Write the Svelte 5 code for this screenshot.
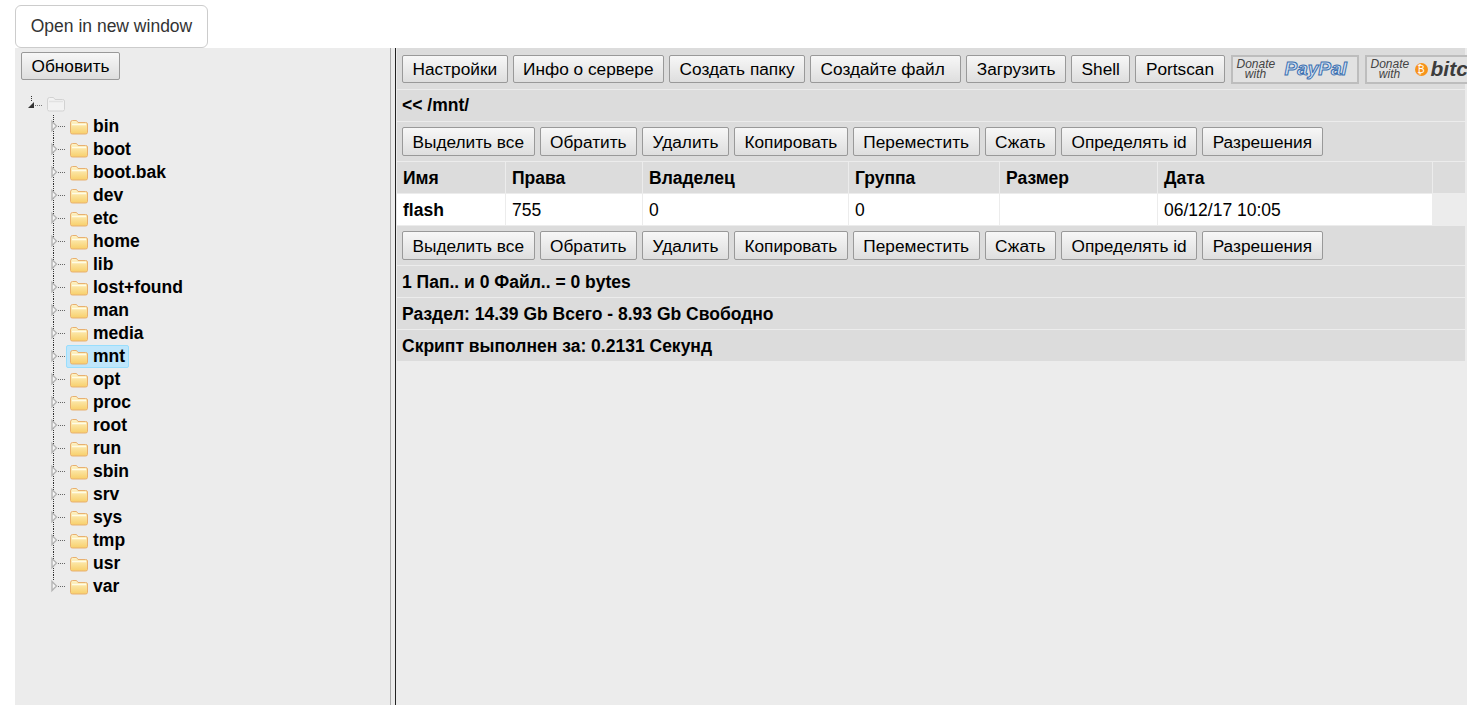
<script>
  const dirs = ['bin','boot','boot.bak','dev','etc','home','lib','lost+found','man','media','mnt','opt','proc','root','run','sbin','srv','sys','tmp','usr','var'];
  const top = ['Настройки','Инфо о сервере','Создать папку','Создайте файл','Загрузить','Shell','Portscan'];
  const acts = ['Выделить все','Обратить','Удалить','Копировать','Переместить','Сжать','Определять id','Разрешения'];
  const cols = [['Имя',109],['Права',137],['Владелец',206],['Группа',151],['Размер',158],['Дата',275]];
</script>

{#snippet folder(pale)}
  <svg class="folder" width="18" height="16" viewBox="0 0 18 16">
    <path d="M0.5 4 Q0.5 1.5 2.5 1.5 L6.5 1.5 L8 3.5 L15.5 3.5 Q17.5 3.5 17.5 5 L17.5 13.5 Q17.5 15 15.5 15 L2.5 15 Q0.5 15 0.5 13.5 Z" fill={pale ? '#f2f2f2' : 'url(#fold)'} stroke={pale ? '#d2d2d2' : '#e8b070'} />
    <path d="M2 5.5 H16" stroke={pale ? '#e2e2e2' : '#fffbe6'} stroke-width="1.5" />
  </svg>
{/snippet}

<svg class="defs" width="0" height="0" aria-hidden="true">
  <defs>
    <linearGradient id="fold" x1="0" y1="0" x2="0" y2="1">
      <stop offset="0" stop-color="#fdf3c8" />
      <stop offset="1" stop-color="#f8cf6a" />
    </linearGradient>
  </defs>
</svg>

<div class="page">
  <a class="open" href="#open">Open in new window</a>
  <div class="panel">
    <aside class="left">
      <button class="refresh">Обновить</button>
      <div class="root">
        <svg width="20" height="16" viewBox="0 0 20 16">
          <path d="M4.5 0 V6" stroke="#333" stroke-dasharray="1 1" />
          <path d="M1 12 L7 6 V12 Z" fill="#333" />
          <path d="M8 9.5 H15" stroke="#777" stroke-dasharray="1 1" />
        </svg>
        {@render folder(true)}
      </div>
      <ul class="tree">
        {#each dirs as d, i}
          <li>
            <svg class="arrow" width="16" height="23" viewBox="0 0 16 23">
              <path d={i === dirs.length - 1 ? 'M3.5 0 V6' : 'M3.5 0 V23'} stroke="#333" stroke-dasharray="1 1" />
              <path d="M2 6.5 L6.5 11 L2 15.5 Z" fill="#f6f6f6" stroke="#b4b4b4" stroke-width="1.4" />
              <path d="M8 11.5 H15" stroke="#666" stroke-dasharray="1 1" />
            </svg>
            <span class="node" class:sel={d === 'mnt'}>
              {@render folder(false)}
              <b>{d}</b>
            </span>
          </li>
        {/each}
      </ul>
    </aside>
    <div class="split"></div>
    <main class="right">
      <div class="row bar first">
        {#each top as t}<button class:wide={t === 'Создайте файл'}>{t}</button>{/each}
        <div class="donate paypal"><i>Donate<br />with</i><em>PayPal</em></div>
        <div class="donate btc"><i>Donate<br />with</i><span class="coin">₿</span><em>bitcoin</em></div>
      </div>
      <div class="row text"><b>&lt;&lt; /mnt/</b></div>
      <div class="row bar low">{#each acts as t}<button>{t}</button>{/each}</div>
      <div class="table">
        <div class="thead">
          {#each cols as c}<div class="cell" style="width:{c[1]}px"><b>{c[0]}</b></div>{/each}
        </div>
        <div class="tbody">
          <div class="cell" style="width:109px"><b>flash</b></div>
          <div class="cell" style="width:137px">755</div>
          <div class="cell" style="width:206px">0</div>
          <div class="cell" style="width:151px">0</div>
          <div class="cell" style="width:158px"></div>
          <div class="cell" style="width:275px">06/12/17 10:05</div>
        </div>
      </div>
      <div class="row bar low">{#each acts as t}<button>{t}</button>{/each}</div>
      <div class="row text down"><b>1 Пап.. и 0 Файл.. = 0 bytes</b></div>
      <div class="row text down"><b>Раздел: 14.39 Gb Всего - 8.93 Gb Свободно</b></div>
      <div class="row text down"><b>Скрипт выполнен за: 0.2131 Секунд</b></div>
    </main>
  </div>
</div>

<style>
  :global(body) { margin: 0; background: #fff; }
  .defs { position: absolute; }
  .page { height: 705px; overflow: hidden; font-family: "Liberation Sans", Arial, sans-serif; color: #000; box-sizing: border-box; padding: 5px 15px 0; }
  .open { display: block; box-sizing: border-box; width: 193px; height: 43px; line-height: 41px; text-align: center; border: 1px solid #ccc; border-radius: 6px; color: #333; font-size: 17.5px; text-decoration: none; background: #fff; }
  .panel { display: flex; width: 1452px; height: 657px; background: #ececec; overflow: hidden; }
  .left { width: 375px; flex: none; padding: 4px 0 0 6px; box-sizing: border-box; }
  button { height: 28px; box-sizing: border-box; padding: 0 9.5px; font: 17.25px "Liberation Sans", Arial, sans-serif; color: #000; border: 1px solid #999; border-radius: 2px; background: linear-gradient(#f7f7f7, #dedede); white-space: nowrap; flex: none; }
  .wide { padding-right: 15.5px; }
  .refresh { display: block; }
  .root { display: flex; align-items: center; height: 16px; margin: 16px 0 0 6px; }
  .tree { list-style: none; margin: 3px 0 0 29px; padding: 0; }
  .tree li { display: flex; height: 23px; align-items: center; font-size: 17.5px; }
  .arrow { flex: none; }
  .node { display: flex; align-items: center; height: 21px; padding: 0 3px; border: 1px solid transparent; border-radius: 2px; }
  .node b { margin-left: 5px; }
  .node.sel { background: #bfe6fb; border-color: #99defd; }
  .folder { flex: none; display: block; }
  .split { width: 6px; flex: none; background: #ececec; border-left: 1px solid #aaa; border-right: 1px solid #222; box-sizing: border-box; }
  .right { flex: 1; padding: 0 2px 0 1px; min-width: 0; font-size: 17.5px; }
  .row { background: #dcdcdc; margin-bottom: 1px; box-sizing: border-box; }
  .bar { display: flex; align-items: center; gap: 5px; padding-left: 5px; }
  .first { height: 41px; padding-top: 1px; }
  .first button { padding-top: 1px; }
  .low { height: 39px; }
  .low button { height: 29px; padding-top: 1px; }
  .text { height: 31px; line-height: 31px; padding-left: 5px; }
  .down { line-height: 33px; }
  .table { margin-top: 1px; }
  .thead, .tbody { display: flex; height: 31px; margin-bottom: 1px; }
  .cell { box-sizing: border-box; flex: none; padding-left: 6px; line-height: 33px; border-right: 1px solid #ececec; }
  .thead { background: #dcdcdc; }
  .tbody .cell { background: #fff; }
  .donate { flex: none; box-sizing: border-box; width: 128px; height: 29px; margin-left: 1px; border: 2px solid #bdbdbd; background: #e2e2e2; display: flex; align-items: center; padding-left: 4px; color: #444; }
  .donate i { font: italic 12px/10px "Liberation Sans", sans-serif; text-align: center; width: 38px; flex: none; }
  .paypal em { margin-left: 10px; font: italic bold 19px "Liberation Sans", sans-serif; color: #d4e2f3; -webkit-text-stroke: 1px #3a6fb0; }
  .coin { margin-left: 6px; width: 13px; height: 13px; border-radius: 50%; background: #f7931a; color: #fff; font-size: 10px; line-height: 13px; text-align: center; flex: none; }
  .btc em { margin-left: 3px; font: italic bold 21px "Liberation Sans", sans-serif; color: #3c3c3c; }
</style>
